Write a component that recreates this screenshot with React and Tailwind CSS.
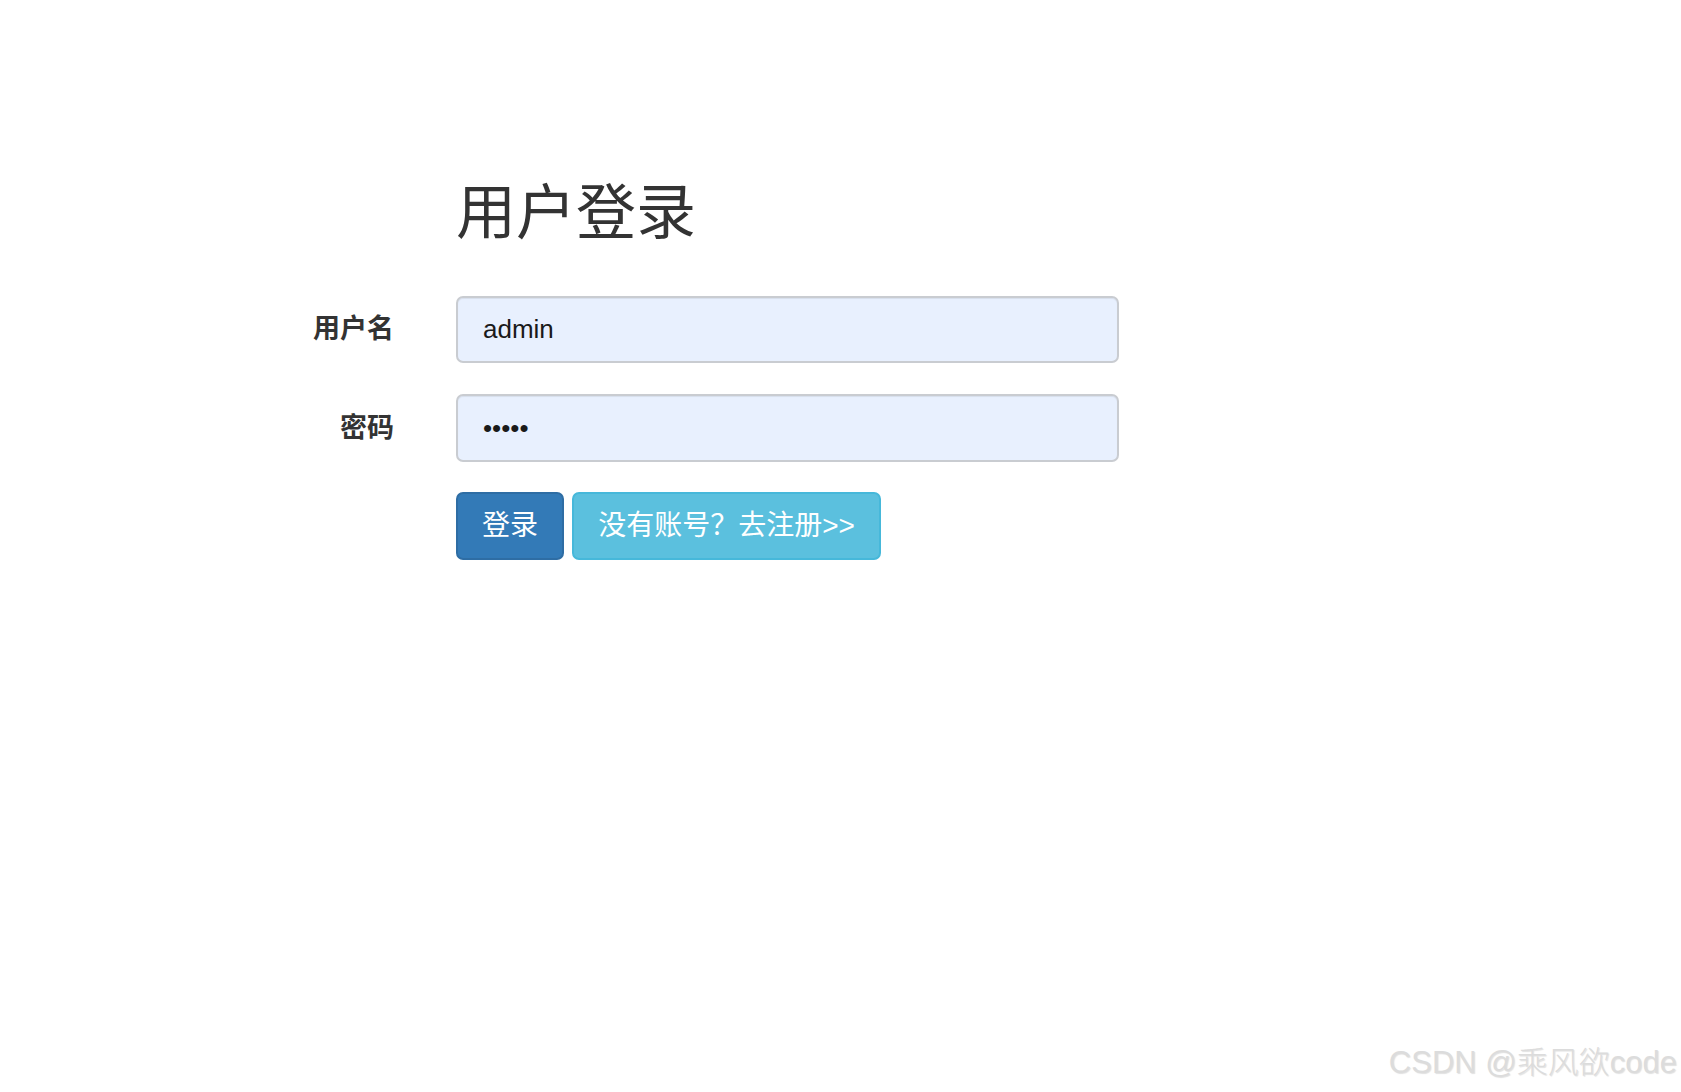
import React from "react";

export default function App() {
  const ff = "font-[family-name:'Liberation_Sans','Noto_Sans_CJK_SC',sans-serif]";
  return (
    <div className={`relative w-[1681px] h-[1092px] bg-white overflow-hidden text-[#333] ${ff}`}>
      <div className="pt-[184px] flex flex-col">
        <div className="flex">
          <div className="w-[394px] shrink-0" />
          <h1 className="ml-[62px] text-[60px] leading-[60px] h-[60px] font-normal text-[#333]">用户登录</h1>
        </div>

        <div className="flex items-center mt-[52px]">
          <label className="w-[394px] shrink-0 text-right text-[27px] font-bold text-[#333]">用户名</label>
          <input
            type="text"
            defaultValue="admin"
            className={`ml-[62px] w-[663px] h-[67px] rounded-[7px] border-2 border-[#c9ccd1] bg-[#e8f0fe] pl-[25px] text-[26px] text-[#1a1a1a] outline-none shadow-[inset_0_1px_1px_rgba(0,0,0,0.075)] ${ff}`}
          />
        </div>

        <div className="flex items-center mt-[31px]">
          <label className="w-[394px] shrink-0 text-right text-[27px] font-bold text-[#333]">密码</label>
          <input
            type="password"
            defaultValue="12345"
            className={`ml-[62px] w-[663px] h-[68px] rounded-[7px] border-2 border-[#c9ccd1] bg-[#e8f0fe] pl-[25px] text-[26px] text-[#1a1a1a] outline-none shadow-[inset_0_1px_1px_rgba(0,0,0,0.075)] ${ff}`}
          />
        </div>

        <div className="flex items-center mt-[30px]">
          <div className="w-[394px] shrink-0" />
          <div className="ml-[62px] flex gap-[8px]">
            <button className={`w-[108px] h-[68px] rounded-[7px] border-2 border-[#2e6da4] bg-[#337ab7] text-white text-[28px] ${ff}`}>登录</button>
            <button className={`w-[309px] h-[68px] rounded-[7px] border-2 border-[#46b8da] bg-[#5bc0de] text-white text-[28px] ${ff}`}>没有账号？去注册&gt;&gt;</button>
          </div>
        </div>
      </div>

      <div className="absolute right-[4px] bottom-[14px] text-[31px] font-light leading-none text-[#dcdcdc] [text-shadow:1px_1px_1px_rgba(0,0,0,0.12)]">
        CSDN @乘风欲code
      </div>
    </div>
  );
}
